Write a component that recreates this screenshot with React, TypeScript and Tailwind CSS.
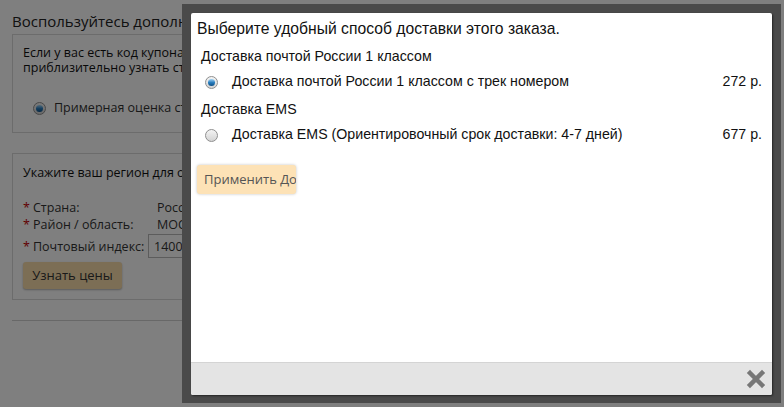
import React from 'react'

// ─── small pieces ─────────────────────────────────────────────────────────────

function Radio({ checked }: { checked?: boolean }) {
  return (
    <span className="relative inline-flex h-[13px] w-[13px] shrink-0 items-center justify-center rounded-full border border-[#8f8f8f] bg-gradient-to-b from-[#f4f4f4] to-[#d4d4d4]">
      {checked && (
        <span className="h-[7px] w-[7px] rounded-full bg-gradient-to-b from-[#9fd4f5] via-[#2a7fbf] to-[#0d4f86]" />
      )}
    </span>
  )
}

function Field({ label, children }: { label: string; children: React.ReactNode }) {
  return (
    <div className="flex items-center whitespace-nowrap">
      <span className="w-[10px] text-[#c40000]">*</span>
      <span className="w-[124px]">{label}</span>
      {children}
    </div>
  )
}

// ─── Component ────────────────────────────────────────────────────────────────

export default function App() {
  return (
    <div className="relative h-[407px] w-[784px] overflow-hidden bg-white font-['Open_Sans',sans-serif] text-[12.5px] text-[#333]">
      {/* page behind the dialog (only the part left of the dialog shows) */}
      <div className="h-full w-[182px] overflow-hidden pl-[12px] pt-[10px]">
        <h2 className="whitespace-nowrap text-[15px] leading-[22px] text-[#222]">
          Воспользуйтесь дополнительными возможностями
        </h2>

        <div className="mt-[2px] h-[99px] w-[600px] border border-[#d8d8d8] pl-[10px] pt-[10px]">
          <p className="whitespace-nowrap leading-[15px] text-[#111]">
            Если у вас есть код купона на скидку, введите его здесь
            <br />
            приблизительно узнать стоимость доставки
          </p>
          <div className="mt-[24px] flex items-center gap-[8px] pl-[10px]">
            <Radio checked />
            <span className="whitespace-nowrap">Примерная оценка стоимости доставки</span>
          </div>
        </div>

        <div className="mt-[20px] h-[147px] w-[600px] border border-[#d8d8d8] pl-[10px] pt-[10px]">
          <p className="whitespace-nowrap leading-[17px] text-[#111]">Укажите ваш регион для оценки стоимости</p>
          <div className="mt-[18px] flex flex-col leading-[17px]">
            <Field label="Страна:">
              <span>Россия</span>
            </Field>
            <Field label="Район / область:">
              <span>МОСКВА</span>
            </Field>
            <div className="mt-[1px] flex items-center whitespace-nowrap">
              <span className="w-[10px] text-[#c40000]">*</span>
              <span className="w-[115px]">Почтовый индекс:</span>
              <span className="flex h-[24px] w-[120px] items-center border border-[#b8b8b8] pl-[5px]">140000</span>
            </div>
          </div>
          <button className="mt-[4px] h-[27px] w-[99px] rounded-[3px] bg-[#f9dcaa] text-[13px] text-[#333] shadow-[0_1px_2px_rgba(0,0,0,0.3)]">
            Узнать цены
          </button>
        </div>

        <div className="mt-[20px] h-px w-[700px] bg-[#d0d0d0]" />
      </div>

      {/* overlay */}
      <div className="absolute inset-0 bg-black/50" />

      {/* dialog frame */}
      <div className="absolute left-[182px] top-[4px] flex h-[399px] w-[599px] bg-[#4a4a4a] pl-[9px] pt-[9px]">
        <div className="flex h-[382px] w-[581px] flex-col overflow-hidden rounded-[2px] bg-white font-['Liberation_Sans',Arial,sans-serif] text-[#111] shadow-[1px_1px_2px_rgba(0,0,0,0.5)]">
          <div className="flex-1 px-[6px] pt-[5px]">
            <h3 className="text-[15.7px] leading-[22px] text-[#111]">Выберите удобный способ доставки этого заказа.</h3>

            <div className="mt-[6px] pl-[4px] text-[14.2px]">
              <div className="leading-[20px]">Доставка почтой России 1 классом</div>
              <div className="mt-[6px] flex h-[20px] items-center pl-[4px] pr-[4px]">
                <Radio checked />
                <span className="ml-[14px] flex-1">Доставка почтой России 1 классом с трек номером</span>
                <span>272 р.</span>
              </div>
              <div className="mt-[7px] leading-[20px]">Доставка EMS</div>
              <div className="mt-[6px] flex h-[20px] items-center pl-[4px] pr-[4px]">
                <Radio />
                <span className="ml-[14px] flex-1">Доставка EMS (Ориентировочный срок доставки: 4-7 дней)</span>
                <span>677 р.</span>
              </div>
            </div>

            <button className="mt-[20px] h-[29px] w-[99px] overflow-hidden whitespace-nowrap rounded-[3px] bg-[#fde2b6] pl-[7px] text-left font-['Open_Sans',sans-serif] text-[13px] text-[#555] shadow-[0_0_3px_rgba(0,0,0,0.25)]">
              Применить Доставку
            </button>
          </div>

          <div className="flex h-[33px] items-center justify-end border-t border-[#d4d4d4] bg-[#e4e4e4] pr-[6px]">
            <svg width="20" height="20" viewBox="0 0 20 20" aria-label="close">
              <path d="M4 4 L16 16 M16 4 L4 16" stroke="#777" strokeWidth="4.5" strokeLinecap="square" />
            </svg>
          </div>
        </div>
      </div>
    </div>
  )
}
